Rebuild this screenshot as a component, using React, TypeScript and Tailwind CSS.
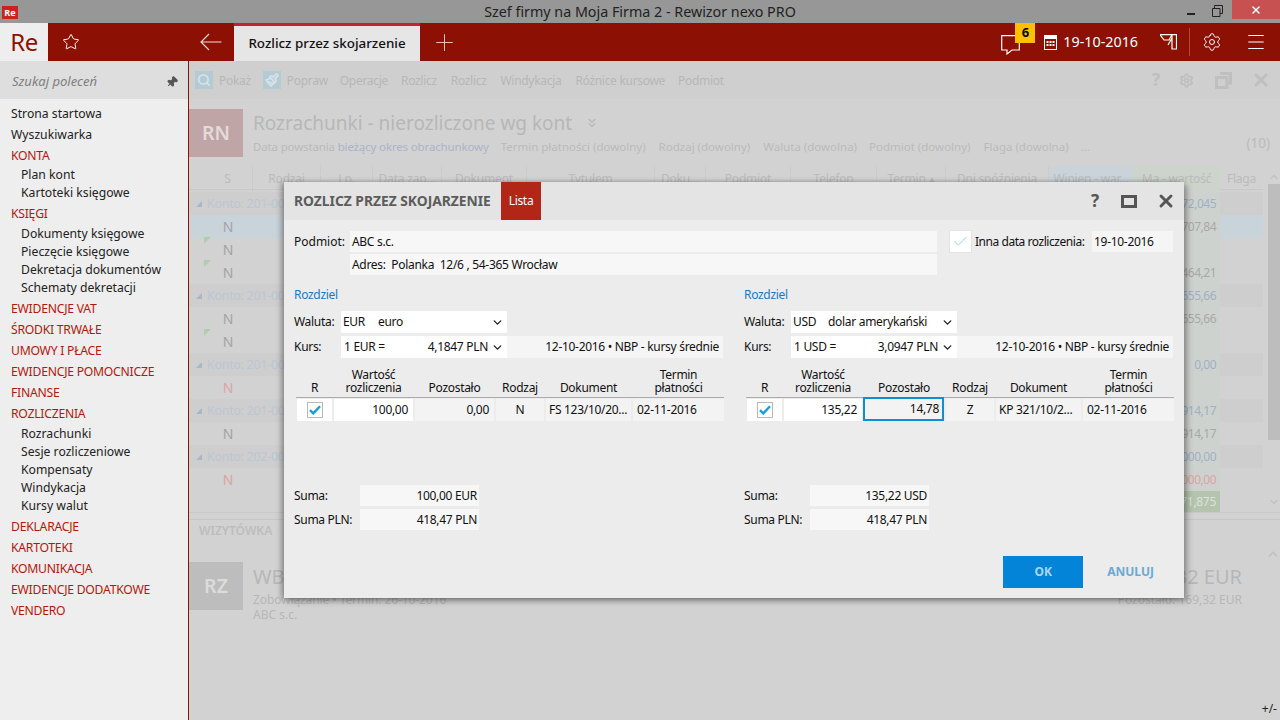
import React from "react";
import { Star, Plus, Settings, Menu, Pin, Search, Paintbrush, X, ChevronDown, ChevronUp, ChevronsDown, Check } from "lucide-react";

const Top = ({ children, red }: { children: string; red?: boolean }) => (
  <div className={`h-[21px] leading-[21px] pl-[11px] whitespace-nowrap ${red ? "text-[#b5170a] tracking-[-0.25px]" : "text-[#222]"}`}>{children}</div>
);
const Sub = ({ items, first }: { items: string[]; first?: boolean }) => (
  <div className={first ? "pb-[1px]" : "pt-[1px] pb-[1px]"}>
    {items.map((s) => (
      <div key={s} className="h-[18px] leading-[18px] pl-[21px] text-[#222] whitespace-nowrap">{s}</div>
    ))}
  </div>
);

const bgCols = "grid grid-cols-[64px_68px_52px_69px_85px_128px_51px_85px_86px_69px_103px_84px_87px_43px]";
type RowT = { kind: "g" | "n" | "s" | "r"; label?: string; val?: string; flag?: boolean };
const rows: RowT[] = [
  { kind: "g", label: "Konto: 201-000", val: "72,045" },
  { kind: "s", label: "N", val: "707,84" },
  { kind: "n", label: "N", flag: true },
  { kind: "n", label: "N", flag: true, val: "464,21" },
  { kind: "g", label: "Konto: 201-000", val: "655,66" },
  { kind: "n", label: "N", val: "655,66" },
  { kind: "n", label: "N", flag: true },
  { kind: "g", label: "Konto: 201-000", val: "0,00" },
  { kind: "r", label: "N" },
  { kind: "g", label: "Konto: 201-000", val: "914,17" },
  { kind: "n", label: "N", val: "914,17" },
  { kind: "g", label: "Konto: 202-000", val: "000,00" },
  { kind: "r", label: "N", val: "000,00" },
];

const BgRow = ({ r }: { r: RowT }) => {
  const bg = r.kind === "g" ? "bg-[#cecece]" : r.kind === "s" ? "bg-[#c8d3da]" : "";
  const valColor = r.kind === "g" ? "text-[#9fb0c6]" : r.kind === "r" ? "text-[#dba3a3]" : "text-[#a8a8a8]";
  return (
    <div className={`h-[23px] flex text-[14px] leading-[23px] ${bg}`}>
      <div className="w-[944px] relative whitespace-nowrap">
        {r.kind === "g" ? (
          <div className="flex items-center h-full pl-[7px] gap-[5px] text-[#bcc6d2]">
            <span className="w-0 h-0 border-l-[6px] border-l-transparent border-b-[6px] border-b-[#a9b6c8]" />
            <span className="text-[12.500px] tracking-[-0.3px]">{r.label}</span>
          </div>
        ) : (
          <>
            {r.flag && <span className="absolute left-[15px] top-[-1px] w-0 h-0 border-t-[7px] border-t-[#b0cdb0] border-r-[7px] border-r-transparent" />}
            <div className={`w-[78px] text-center ${r.kind === "r" ? "text-[#dba3a3]" : "text-[#a4a4a4]"}`}>{r.label}</div>
          </>
        )}
      </div>
      <div className={`w-[87px] text-right pr-[4px] text-[12px] tracking-[-0.5px] bg-[#ced2ce] ${valColor}`}>{r.val}</div>
      <div className="w-[43px]" />
    </div>
  );
};

const Background = () => (
  <div className="flex-1 bg-[#d2d2d2] text-[#b7b7b7] text-[12px] flex flex-col min-w-0 relative">
    <div className="h-[38px] bg-[#cfcfcf] flex items-center shrink-0 tracking-[-0.3px]">
      <div className="ml-[6px] w-[18px] h-[18px] bg-[#b5cbd4] flex items-center justify-center"><Search size={14} className="text-[#d6e2e7]" strokeWidth={3} /></div>
      <span className="ml-[6px] pt-[2px]">Pokaż</span>
      <div className="ml-[12px] w-[18px] h-[18px] bg-[#b5cbd4] flex items-center justify-center"><Paintbrush size={14} className="text-[#d6e2e7]" strokeWidth={3} /></div>
      <span className="ml-[6px] pt-[2px]">Popraw</span>
      <span className="ml-[12px] pt-[2px]">Operacje</span>
      <span className="ml-[13px] pt-[2px]">Rozlicz</span>
      <span className="ml-[14px] pt-[2px]">Rozlicz</span>
      <span className="ml-[14px] pt-[2px]">Windykacja</span>
      <span className="ml-[14px] pt-[2px]">Różnice kursowe</span>
      <span className="ml-[13px] pt-[2px]">Podmiot</span>
      <div className="ml-auto flex items-center gap-[16px] pr-[9px] text-[#bfbfbf]">
        <span className="text-[17px] font-bold w-[14px] text-center">?</span>
        <Settings size={15} strokeWidth={3} />
        <svg width="17" height="17" viewBox="0 0 17 17" className="ml-[5px]"><path d="M5 1.500h10.500V11H12M1.500 5.500H12V15.500H1.500Z" fill="none" stroke="#bfbfbf" strokeWidth="3" /></svg>
        <X size={20} strokeWidth={3.500} className="ml-[3px]" />
      </div>
    </div>
    <div className="h-[67px] shrink-0 flex pt-[10px]">
      <div className="w-[54px] h-[48px] bg-[#bfa5a5] text-[#e3dada] text-[19.500px] font-semibold flex items-center justify-center">RN</div>
      <div className="ml-[10px] flex-1 min-w-0">
        <div className="flex items-center h-[28px] text-[19px] text-[#b7b7b7] whitespace-nowrap">Rozrachunki - nierozliczone wg kont<ChevronsDown size={14} className="ml-[13px]" /></div>
        <div className="flex whitespace-nowrap h-[20px] leading-[20px] text-[#bababa] text-[11.500px] relative">
          <span className="tracking-[-0.15px]">Data powstania <span className="text-[#aab4ca]">bieżący okres obrachunkowy</span></span>
          <span className="ml-[12px]">Termin płatności (dowolny)</span>
          <span className="ml-[13px]">Rodzaj (dowolny)</span>
          <span className="ml-[13px]">Waluta (dowolna)</span>
          <span className="ml-[12px]">Podmiot (dowolny)</span>
          <span className="ml-[13px]">Flaga (dowolna)</span>
          <span className="ml-[12px]">...</span>
          <span className="ml-auto pr-[10px] text-[13.500px] -mt-[4px]">(10)</span>
        </div>
      </div>
    </div>
    <div className="flex h-[347px] shrink-0 border-b border-[#c8c8c8]">
      <div className="w-[1074px] shrink-0">
        <div className={`${bgCols} h-[24px] leading-[25px] text-[#bbb] text-center border-b border-[#c8c8c8] mb-[2px] tracking-[-0.2px] whitespace-nowrap`}>
          <div className="pl-[14px] border-r border-dotted border-[#c4c4c4]">S</div>
          <div className="border-r border-dotted border-[#c4c4c4]">Rodzaj</div>
          <div className="border-r border-dotted border-[#c4c4c4]">Lp.</div>
          <div className="border-r border-dotted border-[#c4c4c4]">Data zap...</div>
          <div className="border-r border-dotted border-[#c4c4c4]">Dokument</div>
          <div className="border-r border-dotted border-[#c4c4c4]">Tytułem</div>
          <div className="border-r border-dotted border-[#c4c4c4]">Doku...</div>
          <div className="border-r border-dotted border-[#c4c4c4]">Podmiot</div>
          <div className="border-r border-dotted border-[#c4c4c4]">Telefon</div>
          <div className="border-r border-dotted border-[#c4c4c4]">Termin ▴</div>
          <div className="border-r border-dotted border-[#c4c4c4]">Dni spóźnienia</div>
          <div className="bg-[#c9d3d9]">Winien - war...</div>
          <div className="bg-[#ccd4cc]">Ma - wartość</div>
          <div>Flaga</div>
        </div>
        {rows.map((r, i) => <BgRow key={i} r={r} />)}
        <div className="h-[21px] flex">
          <div className="w-[944px]" />
          <div className="w-[87px] bg-[#b5c4ae] text-right pr-[4px] text-[#dbe3d7] leading-[21px] tracking-[-0.3px]">71,875</div>
        </div>
      </div>
      <div className="ml-[5px] w-[12px] flex flex-col items-center text-[#c3c3c3]">
        <ChevronUp size={12} className="mt-[5px]" strokeWidth={3} />
        <div className="w-[12px] h-[256px] bg-[#bdbdbd] mt-[1px] shrink-0" />
        <ChevronDown size={12} className="mt-[56px]" strokeWidth={3} />
      </div>
    </div>
    <div className="h-[1px] bg-[#c6c6c6] mt-[6px]" />
    <div className="flex-1 relative">
      <div className="h-[22px] leading-[22px] pl-[10px] font-semibold text-[#bdbdbd]">WIZYTÓWKA</div>
      <ChevronUp size={14} strokeWidth={3} className="absolute right-[0px] top-[27px] text-[#c3c3c3]" />
      <div className="flex mt-[20px]">
        <div className="w-[54px] h-[48px] bg-[#bdbdbd] text-[#dcdcdc] text-[19.500px] font-semibold flex items-center justify-center">RZ</div>
        <div className="ml-[10px] flex-1 flex justify-between pr-[38px]">
          <div>
            <div className="text-[20px] h-[30px] leading-[30px]">WB</div>
            <div className="leading-[15px] text-[12px] tracking-[-0.1px]">Zobowiązanie • Termin: 26-10-2016</div>
            <div className="leading-[15px] text-[12px]">ABC s.c.</div>
          </div>
          <div className="text-right">
            <div className="text-[20px] h-[30px] leading-[30px]">169,32 EUR</div>
            <div className="leading-[15px] text-[12px]">Pozostało: 169,32 EUR</div>
          </div>
        </div>
      </div>
      <div className="absolute right-[3px] bottom-[2px] text-[#222] text-[12px]">+/-</div>
    </div>
  </div>
);

const Chevron = () => <ChevronDown size={13} strokeWidth={2.600} className="text-[#222] shrink-0" />;

const Check2 = () => (
  <div className="w-[16px] h-[16px] bg-white border border-[#b8b8b8] flex items-center justify-center">
    <svg width="12" height="10" viewBox="0 0 12 10"><path d="M1 5.200 4.300 8.400 11 1.200" fill="none" stroke="#12a0dc" strokeWidth="2.400" /></svg>
  </div>
);

type Side = { cur: string; name: string; rate: string; val: string; rem: string; kind: string; doc: string; sum: string; focus?: boolean };

const Column = ({ d }: { d: Side }) => {
  const tpl = d.focus ? "grid-cols-[35px_78px_80px_48px_85px_91px]" : "grid-cols-[35px_79px_79px_48px_85px_91px]";
  return (
    <div className="w-[450px] shrink-0">
      <div className="h-[16px] leading-[15px] mt-[12px] text-[#1a78c2]">Rozdziel</div>
      <div className="flex items-center h-[22px] mt-[8px]">
        <span className="w-[47px]">Waluta:</span>
        <div className="w-[166px] h-[22px] bg-white flex items-center pl-[2px] pr-[3px] whitespace-nowrap">
          <span className="w-[35px]">{d.cur}</span><span className="flex-1">{d.name}</span><Chevron />
        </div>
      </div>
      <div className="flex items-center h-[22px] mt-[3px]">
        <span className="w-[47px]">Kurs:</span>
        <div className="w-[166px] h-[22px] bg-white flex items-center pl-[3px] pr-[3px] whitespace-nowrap">
          <span className="flex-1">1 {d.cur} =</span><span className="mr-[3px]">{d.rate} PLN</span><Chevron />
        </div>
        <div className="w-[216px] h-[22px] leading-[22px] bg-[#f5f5f5] text-right pr-[4px] whitespace-nowrap">12-10-2016 • NBP - kursy średnie</div>
      </div>
      <div className={`ml-[3px] w-[427px] grid ${tpl} gap-x-[2px] h-[28px] mt-[8px] text-center leading-[12.500px] items-end`}>
        <div>R</div><div>Wartość<br />rozliczenia</div><div>Pozostało</div><div>Rodzaj</div><div>Dokument</div><div>Termin<br />płatności</div>
      </div>
      <div className="ml-[2px] w-[428px] h-[1px] bg-[#ababab] mt-[3px]" />
      <div className={`ml-[3px] w-[427px] grid ${tpl} gap-x-[2px] h-[21px] leading-[22px] mt-[1px]`}>
        <div className="bg-white flex items-center justify-center"><Check2 /></div>
        <div className="bg-white text-right pr-[5px]">{d.val}</div>
        <div className={d.focus ? "bg-[#f3f3f3] text-right pr-[3px] border-2 border-[#0d8fd4] -mt-[2px] -ml-[1px] h-[24px] leading-[20px]" : "bg-[#f3f3f3] text-right pr-[5px]"}>{d.rem}</div>
        <div className="bg-[#f3f3f3] text-center">{d.kind}</div>
        <div className="bg-[#f3f3f3] pl-[3px] whitespace-nowrap">{d.doc}</div>
        <div className="bg-[#f3f3f3] pl-[4px]">02-11-2016</div>
      </div>
      <div className="mt-[65px] flex items-center h-[21px]">
        <span className="w-[66px]">Suma:</span>
        <div className="w-[119px] h-[21px] leading-[21px] bg-[#f7f7f7] text-right pr-[2px]">{d.sum}</div>
      </div>
      <div className="mt-[3px] flex items-center h-[21px]">
        <span className="w-[66px]">Suma PLN:</span>
        <div className="w-[119px] h-[21px] leading-[21px] bg-[#f7f7f7] text-right pr-[2px]">418,47 PLN</div>
      </div>
    </div>
  );
};

const Modal = () => (
  <div className="absolute left-[284px] top-[182px] w-[900px] h-[416px] bg-[#ececec] shadow-[-3px_0_5px_rgba(0,0,0,0.3),3px_3px_6px_rgba(0,0,0,0.35)] text-[12px] tracking-[-0.3px] text-[#111] flex flex-col">
    <div className="h-[38px] bg-[#e4e4e4] flex items-center shrink-0">
      <span className="ml-[10px] text-[13.800px] tracking-normal font-bold text-[#5c5c5c] whitespace-nowrap">ROZLICZ PRZEZ SKOJARZENIE</span>
      <div className="ml-auto flex items-center text-[#555]">
        <span className="text-[17px] font-bold w-[14px] text-center">?</span>
        <div className="ml-[19px] w-[16px] h-[13px] border-[3px] border-[#555]" />
        <X size={20} strokeWidth={3.500} className="ml-[19px] mr-[8px]" />
      </div>
    </div>
    <div className="absolute left-[217px] top-0 w-[40px] h-[38px] bg-[#b22618] text-white flex items-center justify-center">Lista</div>
    <div className="px-[10px] pt-[11px] flex-1 flex flex-col">
      <div className="flex">
        <div className="w-[643px] shrink-0">
          <div className="flex h-[21px] items-center">
            <span className="w-[56px] tracking-normal">Podmiot:</span>
            <div className="flex-1 h-full bg-[#f7f7f7] leading-[21px] pl-[2px]">ABC s.c.</div>
          </div>
          <div className="flex h-[21px] mt-[2px] items-center">
            <span className="w-[56px]" />
            <div className="flex-1 h-full bg-[#f7f7f7] leading-[21px] pl-[2px] whitespace-pre">Adres:  Polanka  12/6 , 54-365 Wrocław</div>
          </div>
        </div>
        <div className="ml-[12px] flex-1 flex items-start min-w-0">
          <div className="w-[23px] h-[23px] -mt-[1px] bg-white border border-[#e4e4e4] flex items-center justify-center shrink-0">
            <Check size={17} strokeWidth={1.500} className="text-[#b7e1f2]" />
          </div>
          <span className="ml-[3px] h-[21px] leading-[21px] whitespace-nowrap tracking-[-0.45px]">Inna data rozliczenia:</span>
          <div className="ml-auto mr-[1px] w-[81px] h-[21px] leading-[21px] bg-[#f5f5f5] pl-[2px] shrink-0">19-10-2016</div>
        </div>
      </div>
      <div className="flex">
        <Column d={{ cur: "EUR", name: "euro", rate: "4,1847", val: "100,00", rem: "0,00", kind: "N", doc: "FS 123/10/20...", sum: "100,00 EUR" }} />
        <Column d={{ cur: "USD", name: "dolar amerykański", rate: "3,0947", val: "135,22", rem: "14,78", kind: "Z", doc: "KP 321/10/2...", sum: "135,22 USD", focus: true }} />
      </div>
      <div className="mt-[26px] flex justify-end items-center tracking-normal">
        <div className="w-[80px] h-[32px] bg-[#0484d9] text-[#a9d6f0] font-bold flex items-center justify-center">OK</div>
        <div className="ml-[24px] mr-[20px] text-[#6aaad2] font-bold">ANULUJ</div>
      </div>
    </div>
  </div>
);

export default function App() {
  return (
    <div className="w-[1280px] h-[720px] overflow-hidden relative flex flex-col font-['Noto_Sans',sans-serif] text-[12px]">
      <div className="h-[23px] bg-[#979797] flex items-start relative shrink-0">
        <div className="ml-[2px] mt-[6px] w-[16px] h-[13px] bg-[#cf1f1f] text-white text-[9px] font-bold leading-[13px] text-center">Re</div>
        <div className="flex-1 text-center text-[14.300px] leading-[23px] text-[#222] -ml-[18px]">Szef firmy na Moja Firma 2 - Rewizor nexo PRO</div>
        <div className="absolute right-0 top-0 flex">
          <div className="w-[8px] h-[2px] bg-[#222] mt-[13px]" />
          <svg width="11" height="12" viewBox="0 0 11 12" className="ml-[17px] mt-[5px]"><path d="M2.500 3V.5h8v8H8M.5 3.500h7.500v8H.5Z" fill="none" stroke="#222" /></svg>
          <div className="ml-[9px] w-[48px] h-[19px] bg-[#c75050] flex items-center justify-center"><X size={12} strokeWidth={3} className="text-white" /></div>
        </div>
      </div>
      <div className="h-[38px] bg-[#8c1003] flex items-center shrink-0 text-white">
        <div className="w-[48px] h-full bg-[#eeeeee] text-[#8c1003] text-[24px] flex items-center justify-center tracking-[-0.5px]">Re</div>
        <Star size={18} strokeWidth={1.300} className="ml-[14px]" />
        <svg width="22" height="18" viewBox="0 0 22 18" className="ml-[120px]"><path d="M21.500 9H1M9 1 1 9l8 8" fill="none" stroke="#f3dedb" strokeWidth="1.100" /></svg>
        <div className="ml-[12px] w-[186px] h-full bg-[#e6e6e6] border-t-[3px] border-[#c4203a] text-[#111] text-[13.400px] font-medium flex items-center justify-center whitespace-nowrap">Rozlicz przez skojarzenie</div>
        <Plus size={27} strokeWidth={0.900} className="ml-[11px] text-[#eebfba]" />
        <div className="ml-auto flex items-center h-full">
          <div className="relative w-[34px] h-full mr-[9px]">
            <svg width="19" height="20" viewBox="0 0 19 20" className="absolute left-0 top-[12px]"><path d="M14 .7H.7V15H6v4l5-4h7.300V8" fill="none" stroke="#fff" strokeWidth="1.200" /></svg>
            <div className="absolute left-[14px] top-0 w-[20px] h-[20px] bg-[#ffc000] text-black text-[13px] font-bold flex items-center justify-center">6</div>
          </div>
          <svg width="13" height="15" viewBox="0 0 13 15"><path d="M0 0h13v15H0Z" fill="#fff" /><path d="M1 4h11v10H1Z" fill="#8c1003" /><path d="M2.500 6h2v2h-2ZM5.500 6h2v2h-2ZM8.500 6h2v2h-2ZM2.500 9h2v2h-2ZM5.500 9h2v2h-2ZM8.500 9h2v2h-2Z" fill="#fff" /></svg>
          <span className="ml-[6px] text-[14.300px] whitespace-nowrap">19-10-2016</span>
          <svg width="17" height="16" viewBox="0 0 17 16" className="ml-[22px]"><path d="M0 .7h12L9 6H4L0 .7ZM12 .7h4.500V15H12V.7ZM12 4 8 11" fill="none" stroke="#fff" strokeWidth="1.200" /></svg>
          <div className="ml-[12px] w-[1px] h-[28px] bg-[#b04a3f]" />
          <Settings size={20} strokeWidth={1.200} className="ml-[12px]" />
          <Menu size={22} strokeWidth={1.100} className="ml-[23px] mr-[13px]" />
        </div>
      </div>
      <div className="flex-1 flex min-h-0">
        <div className="w-[189px] shrink-0 bg-[#eeeeee] border-r border-[#8c1003] flex flex-col text-[12.200px]">
          <div className="h-[38px] bg-[#dedede] flex items-center pl-[12px] pr-[10px] pt-[3px] text-[#808080] italic text-[13px] shrink-0">
            Szukaj poleceń
            <Pin size={12} className="ml-auto text-[#555] rotate-45 fill-[#555]" />
          </div>
          <div className="pt-[4px]">
            <Top>Strona startowa</Top>
            <Top>Wyszukiwarka</Top>
            <Top red>KONTA</Top>
            <Sub first items={["Plan kont", "Kartoteki księgowe"]} />
            <Top red>KSIĘGI</Top>
            <Sub items={["Dokumenty księgowe", "Pieczęcie księgowe", "Dekretacja dokumentów", "Schematy dekretacji"]} />
            <Top red>EWIDENCJE VAT</Top>
            <Top red>ŚRODKI TRWAŁE</Top>
            <Top red>UMOWY I PŁACE</Top>
            <Top red>EWIDENCJE POMOCNICZE</Top>
            <Top red>FINANSE</Top>
            <Top red>ROZLICZENIA</Top>
            <Sub items={["Rozrachunki", "Sesje rozliczeniowe", "Kompensaty", "Windykacja", "Kursy walut"]} />
            <Top red>DEKLARACJE</Top>
            <Top red>KARTOTEKI</Top>
            <Top red>KOMUNIKACJA</Top>
            <Top red>EWIDENCJE DODATKOWE</Top>
            <Top red>VENDERO</Top>
          </div>
        </div>
        <Background />
      </div>
      <Modal />
    </div>
  );
}
